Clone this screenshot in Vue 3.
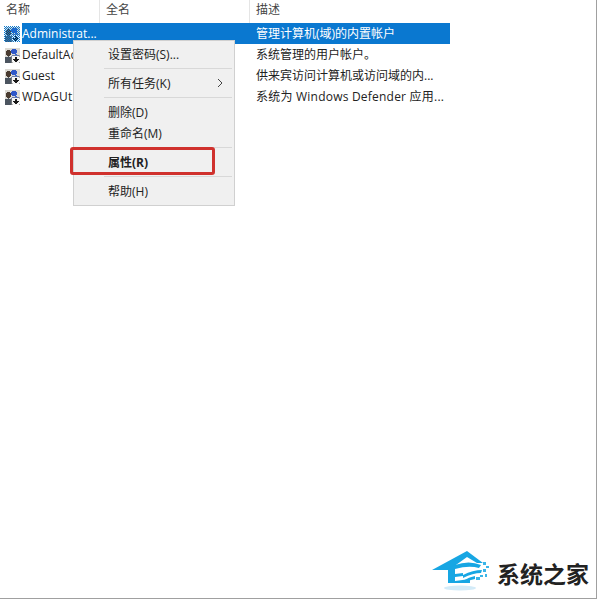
<template>
  <div class="window">
    <div class="list">
      <div class="head">
        <div class="col-name">名称</div>
        <div class="col-full">全名</div>
        <div class="col-desc">描述</div>
      </div>
      <div
        v-for="(user, i) in users"
        :key="user.name"
        class="row"
        :class="{ wide: user.wide }"
      >
        <svg class="user-icon" viewBox="0 0 16 16" shape-rendering="crispEdges">
          <defs>
            <pattern id="dither" width="2" height="2" patternUnits="userSpaceOnUse">
              <rect width="1" height="1" fill="#0a78d0" />
              <rect x="1" y="1" width="1" height="1" fill="#0a78d0" />
            </pattern>
          </defs>
          <rect x="0.5" y="0.5" width="15" height="15" fill="#dcdad4" />
          <circle cx="10" cy="4.5" r="3" fill="#2f58c8" />
          <path d="M6 11 Q9 6 15 8 L15 11 Z" fill="#3768d8" />
          <circle cx="4.5" cy="6" r="3" fill="#4a3b30" />
          <path d="M0.5 15.5 L0.5 11 Q4 8 8 10.5 L8 15.5 Z" fill="#4c5560" />
          <rect x="7.5" y="8.5" width="8.5" height="7.5" rx="1" fill="#f6f6f6" stroke="#8a8a8a" stroke-width="0.6" />
          <path d="M11.8 10 V14 M9.6 12 L11.8 14.6 L14 12" fill="none" stroke="#1a1a1a" stroke-width="1.6" />
          <rect v-if="i === 0" width="16" height="16" fill="url(#dither)" />
        </svg>
        <div class="cells" :class="{ selected: i === 0 }">
          <span class="cell-name">{{ user.name }}</span>
          <span class="cell-desc">{{ user.desc }}</span>
        </div>
      </div>
    </div>

    <div class="menu">
      <template v-for="(item, i) in menu" :key="i">
        <div v-if="item.sep" class="sep"></div>
        <div v-else class="item" :class="{ bold: item.bold }">
          <span>{{ item.label }}</span>
          <svg v-if="item.more" class="arrow" viewBox="0 0 6 10">
            <path d="M1 1 L5 5 L1 9" fill="none" stroke="#444" stroke-width="1" />
          </svg>
        </div>
      </template>
    </div>

    <div class="mark"></div>

    <div class="logo">
      <svg class="house" viewBox="0 0 70 46">
        <!-- roof -->
        <path d="M7 22 L42 3 L58 15 L52 15 L42 9 L24 22 Z" fill="#17a6e3" />
        <!-- wall and window frame -->
        <path d="M23 21 L30 16 L30 33 L45 31 L45 35 L23 35 Z" fill="#17a6e3" />
        <!-- stripes running off to the right -->
        <path d="M30 17 Q44 12 56 17 L54 20 Q44 17 30 21 Z" fill="#17a6e3" />
        <path d="M38 27 Q48 22 57 22 L56 25 Q48 25 38 30 Z" fill="#17a6e3" />
        <path d="M30 26 L38 25 L38 28 L30 29 Z" fill="#17a6e3" />
        <path d="M38 33 Q44 29 50 28 L50 31 Q44 32 38 35 Z" fill="#17a6e3" />
        <g fill="#3ab5e8">
          <rect x="58" y="14" width="3" height="3" />
          <rect x="61" y="18" width="3" height="2" />
          <rect x="58" y="21" width="3" height="3" />
          <rect x="60" y="26" width="2" height="3" />
          <rect x="55" y="27" width="3" height="2" />
          <rect x="51" y="29" width="4" height="3" />
        </g>
        <ellipse cx="35" cy="40" rx="16" ry="2.5" fill="#d3ebf8" />
      </svg>
      <span class="logo-text">系统之家</span>
    </div>
  </div>
</template>

<script setup>
const users = [
  { name: 'Administrat...', desc: '管理计算机(域)的内置帐户' },
  { name: 'DefaultAcco...', desc: '系统管理的用户帐户。' },
  { name: 'Guest', desc: '供来宾访问计算机或访问域的内...' },
  { name: 'WDAGUtility...', desc: '系统为 Windows Defender 应用...', wide: true }
]

const menu = [
  { label: '设置密码(S)...' },
  { sep: true },
  { label: '所有任务(K)', more: true },
  { sep: true },
  { label: '删除(D)' },
  { label: '重命名(M)' },
  { sep: true },
  { label: '属性(R)', bold: true },
  { sep: true },
  { label: '帮助(H)' }
]
</script>

<style>
html, body {
  margin: 0;
  background: #fff;
}
</style>

<style scoped>
.window {
  position: relative;
  width: 597px;
  height: 599px;
  box-sizing: border-box;
  border-right: 1px solid #a0a0a0;
  border-bottom: 1px solid #a0a0a0;
  background: #fff;
  overflow: hidden;
  font-family: "Open Sans", "Noto Sans CJK SC", sans-serif;
  font-size: 12px;
  color: #222;
}

.list {
  width: 450px;
}

.head {
  display: flex;
  height: 23px;
  line-height: 20px;
  color: #444;
}

.head > div {
  box-sizing: border-box;
  padding-left: 6px;
  border-right: 1px solid #e5e5e5;
}

.col-name {
  width: 100px;
}

.col-full {
  width: 150px;
}

.col-desc {
  flex: 1;
  border-right: none !important;
}

.row {
  display: flex;
  align-items: center;
  height: 21px;
}

.row.wide {
  letter-spacing: 0.22px;
}

.user-icon {
  width: 16px;
  height: 16px;
  margin: 0 2px 0 4px;
  flex: none;
}

.cells {
  display: flex;
  flex: 1;
  height: 21px;
  line-height: 21px;
}

.cells.selected {
  background: #0a78d0;
  color: #fff;
}

.cell-name {
  width: 234px;
  box-sizing: border-box;
  font-size: 12px;
}

.cell-desc {
  flex: 1;
  white-space: nowrap;
}

.menu {
  position: absolute;
  left: 73px;
  top: 40px;
  width: 162px;
  height: 166px;
  box-sizing: border-box;
  padding: 2px;
  background: #f0f0f0;
  border: 1px solid #d0d0d0;
}

.item {
  display: flex;
  justify-content: space-between;
  align-items: center;
  height: 21px;
  padding: 0 9px 0 32px;
  color: #222;
}

.item.bold {
  font-weight: 700;
}

.arrow {
  width: 6px;
  height: 10px;
}

.sep {
  height: 1px;
  margin: 4px 0 3px 28px;
  background: #d8d8d8;
}

.mark {
  position: absolute;
  left: 70px;
  top: 147px;
  width: 145px;
  height: 28px;
  box-sizing: border-box;
  border: 3px solid #d0312d;
  border-radius: 3px;
}

.logo {
  position: absolute;
  left: 425px;
  top: 548px;
  display: flex;
  align-items: center;
  gap: 2px;
}

.house {
  width: 70px;
  height: 46px;
}

.logo-text {
  padding-top: 4px;
  font-family: "Noto Sans CJK SC", sans-serif;
  font-size: 23px;
  font-weight: 700;
  color: #222;
  white-space: nowrap;
}
</style>
